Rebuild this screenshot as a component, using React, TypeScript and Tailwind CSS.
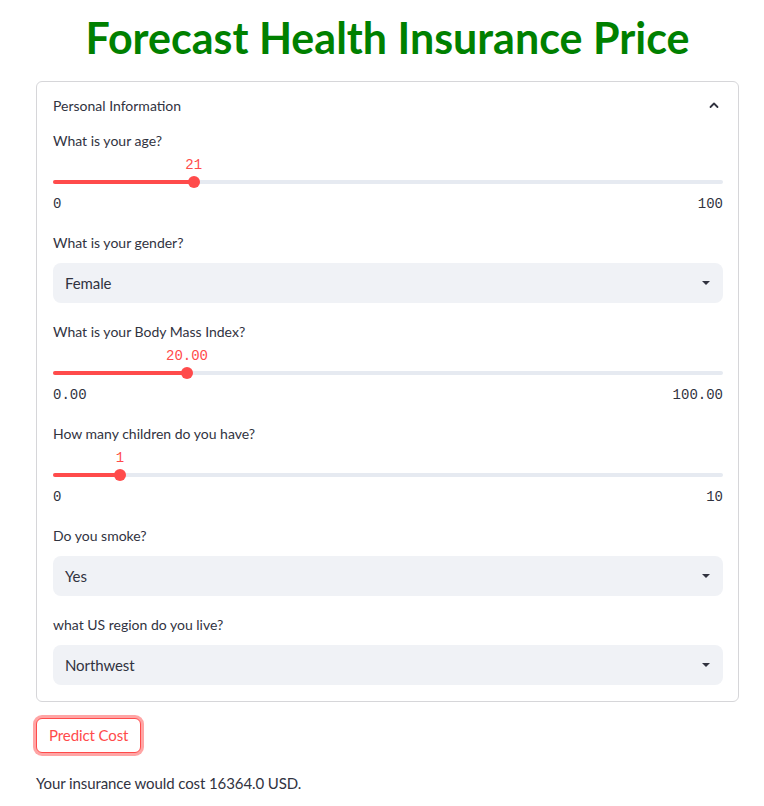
import React from 'react';

const sans = { fontFamily: 'Lato, "Noto Sans", sans-serif' };

function Label({ text }: { text: string }) {
  return <div className="h-[24px] flex items-center text-[14px] text-[#31333f]">{text}</div>;
}

interface SliderProps {
  label: string;
  value: string;
  pct: number;
  min: string;
  max: string;
}

function Slider({ label, value, pct, min, max }: SliderProps) {
  return (
    <div>
      <Label text={label} />
      <div className="relative h-[62px]">
        <div
          className="absolute top-[3px] -translate-x-1/2 font-['Liberation_Mono',monospace] text-[14px] leading-[20px] text-[#ff4b4b]"
          style={{ left: `${pct}%` }}
        >
          {value}
        </div>
        <div className="absolute left-0 right-0 top-[28px] h-[4px] rounded-full bg-[#e6eaf1]" />
        <div className="absolute left-0 top-[28px] h-[4px] rounded-full bg-[#ff4b4b]" style={{ width: `${pct}%` }} />
        <div
          className="absolute top-[24px] h-[12px] w-[12px] -translate-x-1/2 rounded-full bg-[#ff4b4b]"
          style={{ left: `${pct}%` }}
        />
        <div className="absolute left-0 right-0 top-[42px] flex h-[20px] items-center justify-between font-['Liberation_Mono',monospace] text-[14px] text-[#31333f]">
          <span>{min}</span>
          <span>{max}</span>
        </div>
      </div>
    </div>
  );
}

function Select({ label, value }: { label: string; value: string }) {
  return (
    <div>
      <Label text={label} />
      <div className="mt-[9px] flex h-[40px] items-center justify-between rounded-[8px] bg-[#f0f2f6] pl-[12px] pr-[12px] text-[15px] tracking-[-0.1px] text-[#31333f]">
        <span>{value}</span>
        <svg width="10" height="6" viewBox="0 0 10 6">
          <path d="M1 1h8L5 5z" fill="#31333f" />
        </svg>
      </div>
    </div>
  );
}

export default function App() {
  return (
    <div className="min-h-[806px] bg-white" style={sans}>
      <div className="ml-[36px] w-[703px] pt-[10px]">
        <h1 className="text-center text-[43px] font-bold leading-[56px] text-[#008000]">
          Forecast Health Insurance Price
        </h1>

        <div className="mt-[15px] rounded-[6px] border border-[#d6d6d9]">
          <div className="flex h-[46px] items-center justify-between pl-[16px] pr-[15px] text-[14px] text-[#31333f]">
            <span>Personal Information</span>
            <svg width="12" height="12" viewBox="0 0 12 12" className="mr-[3px]">
              <path d="M2.5 8L6 4.5 9.5 8" fill="none" stroke="#31333f" strokeWidth="1.8" strokeLinecap="round" strokeLinejoin="round" />
            </svg>
          </div>
          <div className="flex flex-col gap-[16px] pb-[16px] pl-[16px] pr-[15px]">
            <Slider label="What is your age?" value="21" pct={21} min="0" max="100" />
            <Select label="What is your gender?" value="Female" />
            <Slider label="What is your Body Mass Index?" value="20.00" pct={20} min="0.00" max="100.00" />
            <Slider label="How many children do you have?" value="1" pct={10} min="0" max="10" />
            <Select label="Do you smoke?" value="Yes" />
            <Select label="what US region do you live?" value="Northwest" />
          </div>
        </div>

        <button className="mt-[16px] h-[35px] rounded-[6px] border border-[#ff4b4b] bg-white px-[12px] text-[15px] tracking-[-0.1px] text-[#ff4b4b] shadow-[0_0_0_3px_rgba(255,75,75,0.5)]">
          Predict Cost
        </button>

        <p className="mt-[18px] text-[15px] leading-[24px] tracking-[-0.1px] text-[#31333f]">Your insurance would cost 16364.0 USD.</p>
      </div>
    </div>
  );
}
